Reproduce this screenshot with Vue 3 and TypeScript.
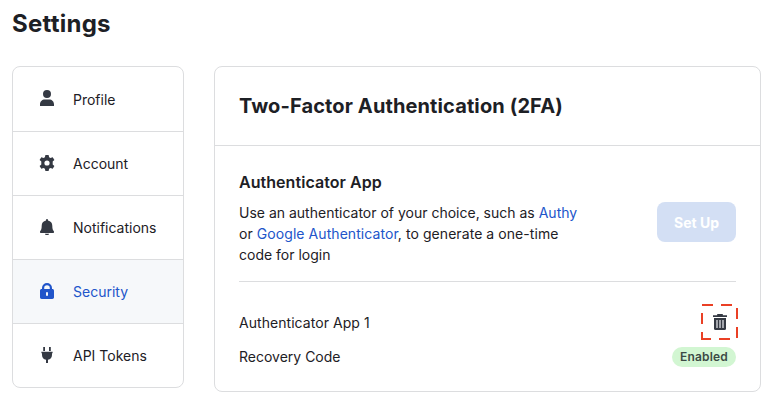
<script setup lang="ts">
import { ref } from 'vue'

interface NavItem {
  id: string
  label: string
  icon: string
}

const items: NavItem[] = [
  { id: 'profile', label: 'Profile', icon: 'M8 0a4 4 0 1 1 0 8a4 4 0 0 1 0-8zM1 16v-1.6C1 11.4 3 9.4 6 9.4h4c3 0 5 2 5 5V16z' },
  { id: 'account', label: 'Account', icon: 'M6.4 0h3.2l.5 2.2 1.4.8 2.200-.8 1.700 2.800-1.700 1.600v2.800l1.700 1.600-1.700 2.800-2.200-.8-1.400.8-.5 2.200H6.400l-.5-2.200-1.400-.8-2.200.8L.6 11l1.700-1.600V6.600L.6 5l1.700-2.800 2.200.8 1.400-.8zM8 5.400a2.600 2.600 0 1 0 0 5.200a2.600 2.600 0 0 0 0-5.200z' },
  { id: 'notifications', label: 'Notifications', icon: 'M7 1a1 1 0 0 1 2 0v.5c2.7.5 4.3 2.5 4.3 5.2 0 3.2.6 4.4 1.4 5.3.7.8.3 2-.8 2H2.1c-1.1 0-1.5-1.2-.8-2 .8-.9 1.4-2.1 1.4-5.3C2.7 4 4.3 2 7 1.5zM6 14.8h4a2 1.4 0 0 1-4 0z' },
  { id: 'security', label: 'Security', icon: 'M3 6V5a5 5 0 0 1 10 0v1h.3c1 0 1.7.7 1.7 1.7v6.6c0 1-.7 1.7-1.7 1.7H2.7c-1 0-1.7-.7-1.7-1.7V7.7c0-1 .7-1.7 1.7-1.7zM5.2 6h5.6V5a2.8 2.8 0 0 0-5.6 0zM7 9.2v3.6h2V9.2z' },
  { id: 'tokens', label: 'API Tokens', icon: 'M4.2 0H6v4H4.2zM10 0h1.800v4H10zM2.400 4.800h11.200v1.400h-.6v1.800c0 2.500-1.600 4.300-4 4.800V16H7v-3.200c-2.400-.5-4-2.300-4-4.800V6.200h-.6z' },
]

const active = ref<string>('security')
</script>

<template>
  <main class="page">
    <h1>Settings</h1>
    <div class="columns">
      <nav class="menu">
        <a v-for="item in items" :key="item.id" class="menu-item" :class="{ active: item.id === active }" @click="active = item.id">
          <svg class="menu-icon" viewBox="0 0 16 16"><path :d="item.icon" fill="currentColor" fill-rule="evenodd" /></svg>
          <span class="menu-label">{{ item.label }}</span>
        </a>
      </nav>
      <section class="card">
        <header class="card-head"><h2>Two-Factor Authentication (2FA)</h2></header>
        <div class="card-body">
          <div class="intro">
            <div class="copy">
              <h3>Authenticator App</h3>
              <p>Use an authenticator of your choice, such as <a>Authy</a><br><span class="open">or <a>Google Authenticator</a>, to generate a one-time</span><br>code for login</p>
            </div>
            <button class="setup" disabled>Set Up</button>
          </div>
          <div class="row app-row">
            <span class="app-name">Authenticator App 1</span>
            <span class="delete">
              <svg class="outline" viewBox="0 0 38 38" fill="none" stroke="#ea4025" stroke-width="2">
                <path d="M2 2H13M21 2H32M37 5V16M37 24V35M30 36H19M11 36H2V29M2 21V10" />
              </svg>
              <svg class="trash" viewBox="0 0 14 16">
                <path d="M0 1.200H4.200V0H9.800V1.200H14V3H0z" fill="#343943" />
                <path d="M1 4H13V14.500Q13 16 11.500 16H2.500Q1 16 1 14.500z" fill="#343943" />
                <path d="M4 6V14M7 6V14M10 6V14" stroke="#a9acb2" stroke-width="1.900" />
              </svg>
            </span>
          </div>
          <div class="row code-row">
            <span class="code-name">Recovery Code</span>
            <span class="badge">Enabled</span>
          </div>
        </div>
      </section>
    </div>
  </main>
</template>

<style>
body {
  background: #fff;
}
</style>

<style scoped>
.page {
  box-sizing: border-box;
  width: 772px;
  height: 402px;
  padding: 8px 11px 0 12px;
  font-family: Inter, sans-serif;
  font-size: 14px;
  color: #1d2025;
  overflow: hidden;
}
h1, h2, h3, p {
  margin: 0;
}
h1 {
  height: 58px;
  font-size: 24px;
  line-height: 32px;
  font-weight: 700;
  letter-spacing: 0.25px;
}
.columns {
  display: flex;
  align-items: flex-start;
  gap: 30px;
}
.menu {
  box-sizing: border-box;
  width: 172px;
  border: 1px solid #dcdddf;
  border-radius: 8px;
  overflow: hidden;
}
.menu-item {
  box-sizing: border-box;
  display: flex;
  align-items: center;
  height: 64px;
  padding: 2px 0 0 26px;
  gap: 18px;
  border-bottom: 1px solid #dcdddf;
}
.menu-item:first-child {
  height: 65px;
}
.menu-item:last-child {
  height: 63px;
  border-bottom: 0;
}
.menu-item.active {
  background: #f6f8fa;
  color: #2155ca;
}
.menu-icon {
  width: 16px;
  height: 16px;
  color: #343943;
  margin-bottom: 4px;
}
.menu-label {
  margin-bottom: 2px;
}
.active .menu-icon {
  color: #2155ca;
}
.card {
  box-sizing: border-box;
  width: 547px;
  height: 326px;
  border: 1px solid #dcdddf;
  border-radius: 8px;
}
.card-head {
  box-sizing: border-box;
  height: 79px;
  padding: 25px 24px 0;
  border-bottom: 1px solid #dcdddf;
}
h2 {
  font-size: 20px;
  line-height: 28px;
  font-weight: 700;
  letter-spacing: 0.12px;
}
.card-body {
  padding: 0 24px;
}
.intro {
  box-sizing: border-box;
  display: flex;
  justify-content: space-between;
  height: 136px;
  padding-top: 24px;
  border-bottom: 1px solid #dcdddf;
}
h3 {
  font-size: 16px;
  line-height: 24px;
  font-weight: 600;
  letter-spacing: 0.05px;
}
p {
  margin-top: 8px;
  line-height: 21px;
  white-space: nowrap;
}
p a {
  color: #2155ca;
}
.open {
  letter-spacing: 0.065px;
}
.setup {
  width: 79px;
  height: 40px;
  margin-top: 32px;
  padding: 0;
  border: 0;
  border-radius: 8px;
  background: #d3dff4;
  color: #fff;
  font: 700 14px Inter, sans-serif;
}
.row {
  display: flex;
  align-items: center;
  justify-content: space-between;
}
.app-row {
  height: 38px;
  margin-top: 21px;
}
.app-name {
  letter-spacing: 0.05px;
}
.delete {
  display: grid;
  place-items: center;
  width: 38px;
  height: 38px;
  margin-right: -2px;
}
.outline,
.trash {
  grid-area: 1 / 1;
}
.outline {
  width: 38px;
  height: 38px;
}
.trash {
  width: 14px;
  height: 16px;
  margin-left: 2px;
}
.code-row {
  height: 20px;
  margin-top: 6px;
}
.code-name {
  margin-bottom: 2px;
}
.badge {
  width: 64px;
  border-radius: 10px;
  background: #d2f6d2;
  color: #3c4a45;
  font-size: 12px;
  line-height: 20px;
  font-weight: 600;
  letter-spacing: 0.2px;
  text-align: center;
}
</style>
